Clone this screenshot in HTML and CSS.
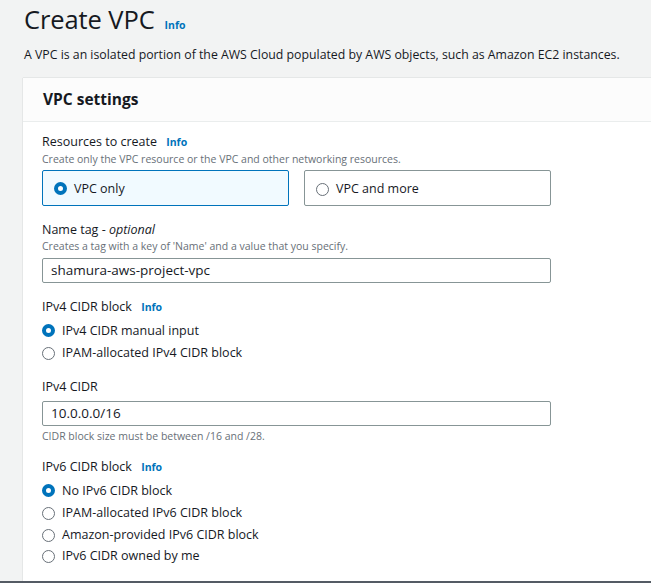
FILE: index.html
```html
<!DOCTYPE html>
<html>
<head>
<meta charset="utf-8">
<link rel="stylesheet" href="styles.css">
</head>
<body>
<div class="page">
  <div class="page-head">
    <div class="title-row">
      <h1 class="title">Create VPC</h1>
      <a class="info info-title">Info</a>
    </div>
    <p class="desc">A VPC is an isolated portion of the AWS Cloud populated by AWS objects, such as Amazon EC2 instances.</p>
  </div>
  <div class="panel">
    <div class="panel-head"><h2>VPC settings</h2></div>
    <div class="panel-body">
      <div class="field f-res">
        <div class="label">Resources to create <a class="info">Info</a></div>
        <div class="hint">Create only the VPC resource or the VPC and other networking resources.</div>
        <div class="tiles">
          <div class="tile selected"><span class="radio checked"></span>VPC only</div>
          <div class="tile"><span class="radio"></span>VPC and more</div>
        </div>
      </div>
      <div class="field f-name">
        <div class="label">Name tag - <i>optional</i></div>
        <div class="hint">Creates a tag with a key of 'Name' and a value that you specify.</div>
        <div class="input">shamura-aws-project-vpc</div>
      </div>
      <div class="field f-v4">
        <div class="label">IPv4 CIDR block <a class="info">Info</a></div>
        <div class="radios">
          <div class="ropt"><span class="radio checked"></span>IPv4 CIDR manual input</div>
          <div class="ropt"><span class="radio"></span>IPAM-allocated IPv4 CIDR block</div>
        </div>
      </div>
      <div class="field f-cidr">
        <div class="label">IPv4 CIDR</div>
        <div class="input">10.0.0.0/16</div>
        <div class="hint hint-below">CIDR block size must be between /16 and /28.</div>
      </div>
      <div class="field f-v6">
        <div class="label">IPv6 CIDR block <a class="info">Info</a></div>
        <div class="radios">
          <div class="ropt"><span class="radio checked"></span>No IPv6 CIDR block</div>
          <div class="ropt"><span class="radio"></span>IPAM-allocated IPv6 CIDR block</div>
          <div class="ropt"><span class="radio"></span>Amazon-provided IPv6 CIDR block</div>
          <div class="ropt"><span class="radio"></span>IPv6 CIDR owned by me</div>
        </div>
      </div>
    </div>
  </div>
</div>
<div class="bottom-bar"></div>
</body>
</html>
```

FILE: styles.css
```css
* { box-sizing: border-box; }
html, body { margin: 0; padding: 0; }
body {
  width: 651px;
  height: 583px;
  overflow: hidden;
  background: #f2f3f3;
  font-family: "Open Sans", "Noto Sans", sans-serif;
  color: #16191f;
  position: relative;
}
.page { padding-left: 23px; }
.page-head { padding-left: 1px; }
.title-row {
  height: 38px;
  display: flex;
  align-items: baseline;
}
.title {
  margin: 0;
  font-size: 25.5px;
  font-weight: 400;
  line-height: 38px;
  letter-spacing: -0.1px;
}
.info {
  color: #0073bb;
  font-size: 10.5px;
  font-weight: 700;
  margin-left: 6px;
  letter-spacing: 0;
}
.info-title { margin-left: 10px; }
.desc {
  margin: 7px 0 0 0;
  font-size: 12.3px;
  line-height: 20px;
  white-space: nowrap;
}
.panel {
  margin-top: 13px;
  background: #ffffff;
  box-shadow: 0 0 1px 0 rgba(0,28,36,0.3);
  height: 520px;
}
.panel-head {
  height: 44px;
  border-bottom: 1px solid #eaeded;
  padding-left: 20px;
  display: flex;
  align-items: center;
  background: #fcfcfc;
}
.panel-head h2 {
  margin: 0 0 2px 0;
  font-size: 15.5px;
  font-weight: 700;
  line-height: 22px;
}
.panel-body {
  padding: 10px 0 0 19px;
  width: 528px;
}
.field { margin-bottom: 14px; }
.label {
  font-size: 12.5px;
  line-height: 19px;
}
.label i { font-style: italic; }
.hint {
  font-size: 10.5px;
  line-height: 15px;
  color: #687078;
}
.hint-below { margin-top: 3px; }
.tiles {
  display: grid;
  grid-template-columns: 247px 247px;
  gap: 15px;
  margin-top: 3px;
}
.tile {
  height: 36px;
  border: 1px solid #879596;
  border-radius: 2px;
  display: flex;
  align-items: center;
  padding-left: 11px;
  font-size: 12.5px;
}
.tile.selected {
  background: #f1faff;
  border-color: #0073bb;
}
.radio {
  width: 13px;
  height: 13px;
  border-radius: 50%;
  border: 1px solid #687078;
  display: inline-block;
  margin-right: 7px;
  flex: none;
  background: #fff;
  position: relative;
  top: 1px;
}
.radio.checked {
  border: 4px solid #0073bb;
  top: 0;
}
.input {
  margin-top: 5px;
  height: 25px;
  border: 1px solid #879596;
  border-radius: 2px;
  font-size: 13.5px;
  line-height: 23px;
  padding-left: 8px;
  width: 509px;
}
.f-res { margin-bottom: 14px; }
.f-name .input { margin-top: 4px; }
.f-name { margin-bottom: 14px; }
.radios { margin-top: 3px; }
.ropt {
  display: flex;
  align-items: center;
  height: 21.6px;
  font-size: 12.5px;
}
.f-v4 { margin-bottom: 14px; }
.f-cidr .input { margin-top: 5px; }
.f-cidr { margin-bottom: 13px; }
.bottom-bar {
  position: absolute;
  left: 0;
  right: 0;
  bottom: 0;
  height: 2px;
  background: #545b64;
}
```
